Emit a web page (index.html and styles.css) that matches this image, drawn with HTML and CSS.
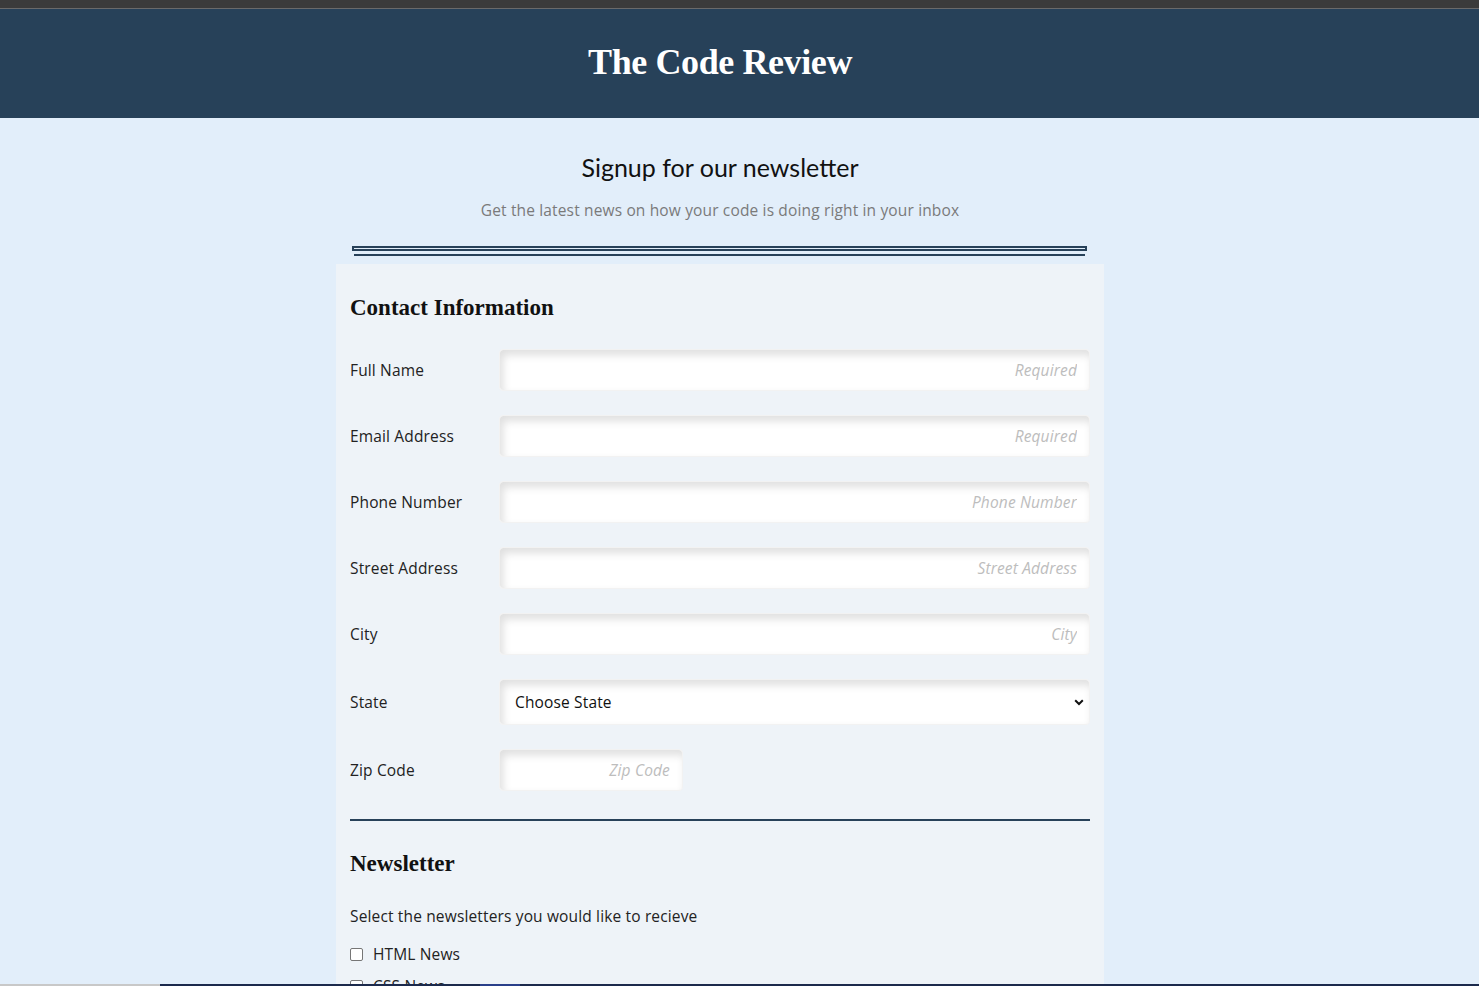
FILE: index.html
```html
<!DOCTYPE html>
<html lang="en">
<head>
<meta charset="utf-8">
<title>The Code Review</title>
<link rel="stylesheet" href="styles.css">
</head>
<body>
<div class="chrome"></div>
<header class="site-header">
  <div class="header-inner">
    <h1 class="site-title">The Code Review</h1>
  </div>
</header>
<div class="page">
  <main class="container">
    <section class="intro">
      <h2 class="intro-title">Signup for our newsletter</h2>
      <p class="intro-text">Get the latest news on how your code is doing right in your inbox</p>
      <div class="double-rule"><div class="rule-top"></div><div class="rule-bottom"></div></div>
    </section>
    <form class="card">
      <h3 class="section-title">Contact Information</h3>
      <div class="field">
        <label class="field-label">Full Name</label>
        <input class="field-input" type="text" placeholder="Required">
      </div>
      <div class="field">
        <label class="field-label">Email Address</label>
        <input class="field-input" type="text" placeholder="Required">
      </div>
      <div class="field">
        <label class="field-label">Phone Number</label>
        <input class="field-input" type="text" placeholder="Phone Number">
      </div>
      <div class="field">
        <label class="field-label">Street Address</label>
        <input class="field-input" type="text" placeholder="Street Address">
      </div>
      <div class="field">
        <label class="field-label">City</label>
        <input class="field-input" type="text" placeholder="City">
      </div>
      <div class="field">
        <label class="field-label">State</label>
        <div class="select-wrap">
          <span class="select-text">Choose State</span>
          <svg class="chevron" width="10" height="7" viewBox="0 0 10 7"><path d="M1.2 1.3 L5 5 L8.8 1.3" fill="none" stroke="#111" stroke-width="2"/></svg>
        </div>
      </div>
      <div class="field">
        <label class="field-label">Zip Code</label>
        <input class="field-input zip" type="text" placeholder="Zip Code">
      </div>
      <hr class="divider">
      <h3 class="section-title news">Newsletter</h3>
      <p class="news-text">Select the newsletters you would like to recieve</p>
      <label class="check"><span class="box"></span>HTML News</label>
      <label class="check"><span class="box"></span>CSS News</label>
    </form>
  </main>
</div>
<div class="taskbar"><div class="tb-left"></div><div class="tb-mid"></div><div class="tb-accent"></div><div class="tb-rest"></div></div>
</body>
</html>
```
FILE: styles.css
```css
html { background: #e2eefa; }
body {
  margin: 0;
  background: #e2eefa;
  font-family: "Open Sans", "Noto Sans", sans-serif;
  font-size: 15.5px;
  letter-spacing: 0.15px;
  color: #222;
  overflow: hidden;
  height: 986px;
}
.chrome {
  height: 8px;
  background: #3b3b3b;
  border-bottom: 1px solid #6a6a6a;
}
.site-header {
  background: #274159;
  height: 109px;
}
.header-inner {
  width: 1440px;
  height: 109px;
  display: flex;
  align-items: center;
  justify-content: center;
}
.site-title {
  margin: 0;
  padding-bottom: 3px;
  font-family: "Liberation Serif", serif;
  font-weight: bold;
  font-size: 36px;
  color: #fff;
  letter-spacing: -0.4px;
}
.page { width: 1440px; }
.container {
  width: 768px;
  margin: 0 auto;
}
.intro { text-align: center; padding-top: 34px; }
.intro-title {
  margin: 0;
  font-family: "Lato", sans-serif;
  font-size: 25px;
  font-weight: 400;
  line-height: 30px;
  letter-spacing: 0;
  color: #111;
}
.intro-text {
  margin: 18px 0 0;
  font-size: 15.5px;
  line-height: 20px;
  color: #7a7a7a;
}
.double-rule {
  margin: 26px 17px 0 16px;
}
.rule-top {
  height: 1px;
  border: 2px solid #274159;
}
.rule-bottom {
  height: 2px;
  background: #274159;
  margin: 3px 2px 0;
}
.card {
  margin-top: 8px;
  background: #eef3f8;
  padding: 30px 14px 40px;
}
.section-title {
  margin: 0 0 27px;
  font-family: "Liberation Serif", serif;
  font-weight: bold;
  font-size: 23px;
  line-height: 28px;
  letter-spacing: 0;
  color: #111;
}
.field {
  display: flex;
  align-items: center;
  margin-bottom: 24px;
}
.field-label {
  width: 149px;
  flex: none;
  color: #222;
}
.field-input {
  flex: 1;
  box-sizing: border-box;
  height: 42px;
  border: 1px solid #f2f2f2;
  border-radius: 4px;
  background: #fff;
  box-shadow: inset 3px 5px 8px rgba(0,0,0,0.13);
  padding: 0 12px;
  text-align: right;
  font-family: "Open Sans", "Noto Sans", sans-serif;
  font-size: 15.5px;
  letter-spacing: 0.15px;
  outline: none;
}
.field-input::placeholder {
  color: #bdbdbd;
  font-style: italic;
}
.field-input.zip {
  flex: none;
  width: 184px;
}
.select-wrap {
  flex: 1;
  box-sizing: border-box;
  height: 46px;
  border: 1px solid #f2f2f2;
  border-radius: 4px;
  background: #fff;
  box-shadow: inset 3px 5px 8px rgba(0,0,0,0.13);
  display: flex;
  align-items: center;
  justify-content: space-between;
  padding: 0 5px 0 15px;
  color: #111;
}
.chevron { display: block; }
.divider {
  border: none;
  height: 2px;
  background: #274159;
  margin: 28px 0 29px;
}
.section-title.news { margin-bottom: 28px; }
.news-text {
  margin: 0 0 18px;
  line-height: 20px;
}
.check {
  display: flex;
  align-items: center;
  height: 20px;
  margin-bottom: 12px;
}
.box {
  width: 11px;
  height: 11px;
  border: 1px solid #767676;
  border-radius: 2px;
  background: #fff;
  margin-right: 10px;
}
.taskbar {
  position: fixed;
  left: 0;
  right: 0;
  bottom: 0;
  height: 2px;
  display: flex;
}
.tb-left { width: 160px; background: #c8c8c8; }
.tb-mid { width: 320px; background: #1c2a4c; }
.tb-accent { width: 40px; background: #2a3f8a; }
.tb-rest { flex: 1; background: #1c2a4c; }
```
